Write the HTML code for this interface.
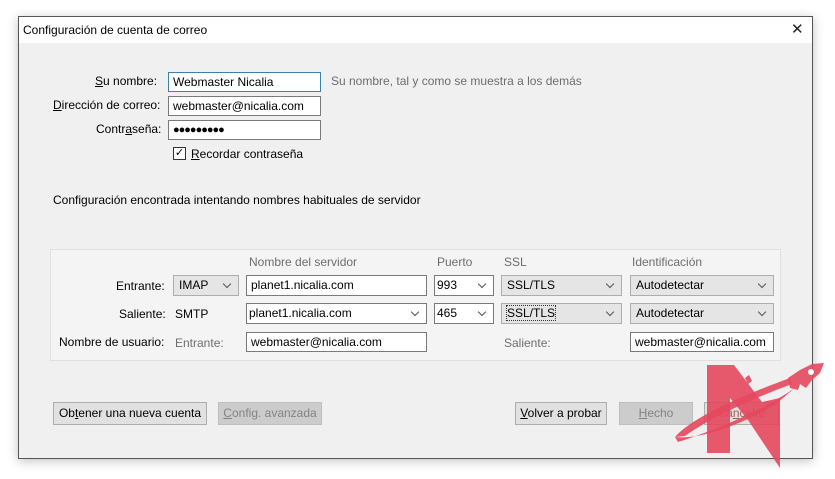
<!DOCTYPE html>
<html><head><meta charset="utf-8"><style>
*{box-sizing:border-box}
body{margin:0;width:835px;height:479px;background:#fff;font-family:"Liberation Sans",sans-serif;font-size:12px;color:#000;position:relative;overflow:hidden}
.a{position:absolute;white-space:nowrap}
.dlg{position:absolute;left:18px;top:16px;width:795px;height:443px;border:1px solid #555;background:#f0f0f0;box-shadow:0 2px 10px rgba(0,0,0,.25)}
.tb{position:absolute;left:0;top:0;right:0;height:26px;background:#fff}
.in{position:absolute;background:#fff;border:1px solid #7a7a7a;height:20px;padding:2px 4px;line-height:14px}
.sel{position:absolute;background:#e5e5e5;border:1px solid #adadad;height:21px;padding:2px 5px;line-height:15px}
.sel.w{background:#fff;border-color:#7a7a7a;padding-left:2px}
.sel:after{content:"";position:absolute;right:8px;top:5px;width:5px;height:5px;border-right:1px solid #555;border-bottom:1px solid #555;transform:rotate(45deg)}
.btn{position:absolute;height:23px;border:1px solid #adadad;background:#e1e1e1;text-align:center;line-height:21px}
.dis{background:#cccccc;border-color:#bfbfbf;color:#838383}
.g{color:#6d6d6d}
u{text-decoration:underline}
</style></head><body>
<div class="dlg">
<div class="tb"></div>
<div class="a" style="left:4px;top:6px">Configuración de cuenta de correo</div>
<div class="a" style="left:772px;top:3px;font-size:15px;font-weight:normal;color:#222">✕</div>
</div>
<div class="a" style="left:50px;top:249px;width:731px;height:112px;border:1px solid #e0e0e0;background:#f4f4f4"></div>

<div class="a" style="left:95px;top:74px"><u>S</u>u nombre:</div>
<div class="in" style="left:168px;top:72px;width:153px;border-color:#3c7fb1">Webmaster Nicalia</div>
<div class="a g" style="left:331px;top:74px">Su nombre, tal y como se muestra a los demás</div>
<div class="a" style="left:53px;top:98px"><u>D</u>irección de correo:</div>
<div class="in" style="left:168px;top:96px;width:153px">webmaster@nicalia.com</div>
<div class="a" style="left:96px;top:122px">Contr<u>a</u>seña:</div>
<div class="in" style="left:168px;top:120px;width:153px;font-size:11px;letter-spacing:-1px">●●●●●●●●●</div>
<div class="a" style="left:173px;top:147px;width:13px;height:13px;border:1px solid #333;background:#fff;font-size:11px;line-height:11px;text-align:center">✓</div>
<div class="a" style="left:191px;top:147px"><u>R</u>ecordar contraseña</div>
<div class="a" style="left:53px;top:193px">Configuración encontrada intentando nombres habituales de servidor</div>

<div class="a g" style="left:249px;top:255px">Nombre del servidor</div>
<div class="a g" style="left:437px;top:255px">Puerto</div>
<div class="a g" style="left:504px;top:255px">SSL</div>
<div class="a g" style="left:632px;top:255px">Identificación</div>

<div class="a" style="left:116px;top:279px">Entrante:</div>
<div class="sel" style="left:173px;top:275px;width:66px">IMAP</div>
<div class="in" style="left:246px;top:275px;width:181px;height:21px">planet1.nicalia.com</div>
<div class="sel w" style="left:434px;top:275px;width:60px">993</div>
<div class="sel" style="left:501px;top:275px;width:121px">SSL/TLS</div>
<div class="sel" style="left:630px;top:275px;width:144px">Autodetectar</div>

<div class="a" style="left:119px;top:307px">Saliente:</div>
<div class="a" style="left:175px;top:307px">SMTP</div>
<div class="sel w" style="left:246px;top:303px;width:181px">planet1.nicalia.com</div>
<div class="sel w" style="left:434px;top:303px;width:60px">465</div>
<div class="sel" style="left:501px;top:303px;width:121px"><span style="outline:1px dotted #333">SSL/TLS</span></div>
<div class="sel" style="left:630px;top:303px;width:144px">Autodetectar</div>

<div class="a" style="left:59px;top:335px">Nombre de usuario:</div>
<div class="a g" style="left:175px;top:336px">Entrante:</div>
<div class="in" style="left:246px;top:332px;width:181px">webmaster@nicalia.com</div>
<div class="a g" style="left:504px;top:336px">Saliente:</div>
<div class="in" style="left:630px;top:332px;width:144px">webmaster@nicalia.com</div>

<div class="btn" style="left:53px;top:402px;width:154px">Ob<u>t</u>ener una nueva cuenta</div>
<div class="btn dis" style="left:218px;top:402px;width:104px"><u>C</u>onfig. avanzada</div>
<div class="btn" style="left:515px;top:402px;width:92px"><u>V</u>olver a probar</div>
<div class="btn dis" style="left:619px;top:402px;width:74px"><u>H</u>echo</div>
<div class="btn" style="left:704px;top:402px;width:75px;color:#a55">Ca<u>n</u>celar</div>

<svg class="a" style="left:0;top:0" width="835" height="479">
<g fill="#e4485e" fill-opacity="0.9">
<polygon points="707,365 734,365 762,402 780,398 780,468 748,420 730,398 730,453 707,453"/>
<polygon points="745,378 749,375 752,381 748,384"/>
<path d="M675,437 C690,420 730,400 790,378 L792,384 C735,405 700,425 685,436 Z"/>
<path d="M675,437 C700,440 740,425 775,405 L790,392 795,388 C760,412 710,432 678,442 Z"/>
<path d="M788,378 L800,370 812,364 824,363 820,373 812,380 806,388 800,384 798,390 790,388 Z"/>
</g>
<circle cx="811" cy="372" r="3" fill="#fff"/>
</svg>
</body></html>
